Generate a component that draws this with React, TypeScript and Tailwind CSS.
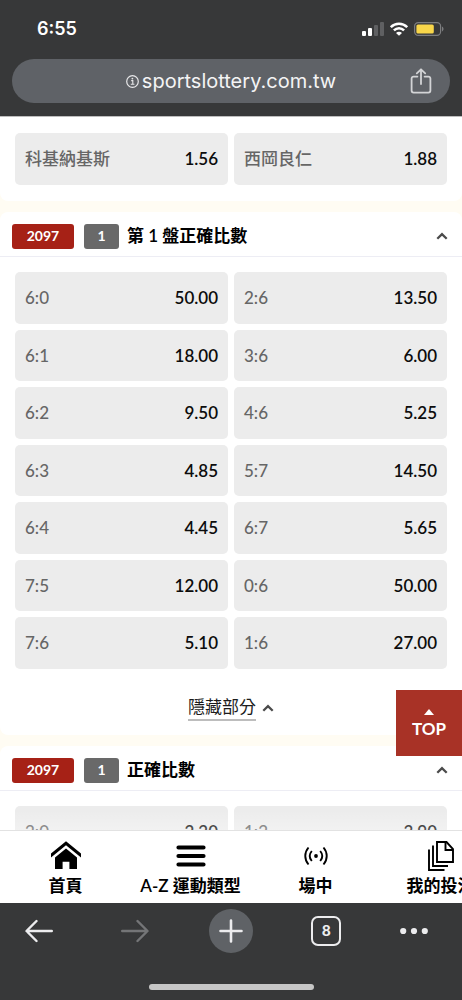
type Odd = {
  label: string;
  value: string;
};

const matchOdds: Odd[] = [
  { label: '科基納基斯', value: '1.56' },
  { label: '西岡良仁', value: '1.88' },
];

const firstSetOdds: Odd[] = [
  { label: '6:0', value: '50.00' },
  { label: '2:6', value: '13.50' },
  { label: '6:1', value: '18.00' },
  { label: '3:6', value: '6.00' },
  { label: '6:2', value: '9.50' },
  { label: '4:6', value: '5.25' },
  { label: '6:3', value: '4.85' },
  { label: '5:7', value: '14.50' },
  { label: '6:4', value: '4.45' },
  { label: '6:7', value: '5.65' },
  { label: '7:5', value: '12.00' },
  { label: '0:6', value: '50.00' },
  { label: '7:6', value: '5.10' },
  { label: '1:6', value: '27.00' },
];

const finalOdds: Odd[] = [
  { label: '2:0', value: '2.20' },
  { label: '1:2', value: '3.90' },
];

const StatusBar = () => (
  <div className="flex h-[59px] items-center justify-between pr-[18px] pb-[2px] pl-[37px] font-['Inter',sans-serif]">
    <span className="text-lg font-semibold text-white">6:55</span>
    <div className="flex items-center gap-[6px]">
      <svg width="22" height="14" viewBox="0 0 22 14" aria-hidden="true">
        <rect x="0" y="9" width="4" height="5" rx="1" fill="#fff" />
        <rect x="6" y="6" width="4" height="8" rx="1" fill="#fff" />
        <rect x="12" y="3" width="4" height="11" rx="1" fill="#5f6062" />
        <rect x="18" y="0" width="4" height="14" rx="1" fill="#5f6062" />
      </svg>
      <svg width="18" height="14" viewBox="0 0 18 14" aria-hidden="true">
        <g fill="none" stroke="#fff" strokeWidth="2.5">
          <path d="M.8 5.2C5.4.6 12.6.6 17.2 5.2" />
          <path d="M3.9 8.4c2.9-2.9 7.3-2.9 10.2 0" />
        </g>
        <path d="M9 13.8 6 10.9c1.7-1.6 4.3-1.6 6 0z" fill="#fff" />
      </svg>
      <svg width="30" height="14" viewBox="0 0 30 14" aria-hidden="true">
        <rect
          x=".6"
          y=".6"
          width="26"
          height="12.8"
          rx="3.6"
          fill="none"
          stroke="#7c7d7f"
          strokeWidth="1.2"
        />
        <rect x="2.4" y="2.4" width="17.4" height="9.2" rx="1.6" fill="#f8d64a" />
        <path d="M28 4.6c2 .8 2 4 0 4.8z" fill="#7c7d7f" />
      </svg>
    </div>
  </div>
);

const AddressBar = () => (
  <div className="relative mx-3 flex h-11 items-center justify-center rounded-full bg-[#5f6267]">
    <a
      href="#site"
      className="flex items-center gap-[3px] font-['Inter',sans-serif] text-xl text-[#f4f4f5]"
    >
      <svg width="13" height="13" viewBox="0 0 13 13" aria-hidden="true">
        <circle cx="6.5" cy="6.5" r="5.8" fill="none" stroke="#e8e8ea" strokeWidth="1.2" />
        <path
          d="M5.2 5.6h1.6v3.6M4.8 9.3h3.6"
          fill="none"
          stroke="#e8e8ea"
          strokeWidth="1.1"
        />
        <circle cx="6.4" cy="3.6" r=".9" fill="#e8e8ea" />
      </svg>
      sportslottery.com.tw
    </a>
    <button type="button" aria-label="分享" className="absolute right-[18px]">
      <svg
        width="22"
        height="26"
        viewBox="0 0 22 26"
        fill="none"
        stroke="#d3d4d6"
        strokeWidth="1.8"
        strokeLinecap="round"
        strokeLinejoin="round"
        aria-hidden="true"
      >
        <path d="M7.4 8.6H3.6a2 2 0 0 0-2 2v12a2 2 0 0 0 2 2h14.8a2 2 0 0 0 2-2v-12a2 2 0 0 0-2-2h-3.8" />
        <path d="M11 16V1.4M6.8 5.4 11 1.3l4.2 4.1" />
      </svg>
    </button>
  </div>
);

const Chevron = () => (
  <svg width="12" height="8" viewBox="0 0 12 8" aria-hidden="true">
    <path d="M1.3 6.8 6 2.2l4.7 4.6" fill="none" stroke="#4b4b4b" strokeWidth="2.3" />
  </svg>
);

const OddButton = ({ label, value }: Odd) => (
  <button
    type="button"
    className="flex min-h-[51px] items-center justify-between rounded-[5px] bg-[#ececec] px-[10px] text-[17px]"
  >
    <span className="font-['Lato_Medium','Lato','Noto_Sans_CJK_TC',sans-serif] font-medium text-[#666]">
      {label}
    </span>
    <span className="font-semibold text-[#0c0c0c]">{value}</span>
  </button>
);

const SectionHeader = ({ title }: { title: string }) => (
  <div className="flex h-[45px] items-center border-b border-[#ededf4] pt-1 pr-[14px] pl-3">
    <span className="mr-[10px] flex h-[25px] w-[62px] items-center justify-center rounded-[3px] bg-[#a62116] text-sm font-bold text-white">
      2097
    </span>
    <span className="mr-2 flex h-[25px] w-[35px] items-center justify-center rounded-[3px] bg-[#696969] text-sm font-bold text-white">
      1
    </span>
    <h2 className="flex-1 text-[17px] font-semibold text-black">{title}</h2>
    <button type="button" aria-label={title}>
      <Chevron />
    </button>
  </div>
);

const BottomNav = () => (
  <nav className="flex h-[73px] shrink-0 overflow-hidden border-t border-[#e2e2e2] bg-white pl-[3px] text-[17px] leading-6 font-semibold">
    <a href="#home" className="flex w-[125px] shrink-0 flex-col items-center pt-[9px]">
      <svg width="32" height="34" viewBox="0 0 32 34" aria-hidden="true">
        <path d="M1 13.5 16 1.2l15 12.300v4L16 5.200 1 17.500z" fill="#000" />
        <path d="M5 17.6 16 8.600l11 9V29h-7.600v-7.200h-6.800V29H5z" fill="#000" />
      </svg>
      <span>首頁</span>
    </a>
    <a href="#sports" className="flex w-[125px] shrink-0 flex-col items-center pt-[9px]">
      <svg width="32" height="34" viewBox="0 0 32 34" aria-hidden="true">
        <path
          d="M3.500 7.500h25M3.500 16h25M3.500 24.500h25"
          stroke="#000"
          strokeWidth="4.200"
          strokeLinecap="round"
        />
      </svg>
      <span className="whitespace-nowrap">A-Z 運動類型</span>
    </a>
    <a href="#live" className="flex w-[125px] shrink-0 flex-col items-center pt-[9px]">
      <svg
        width="32"
        height="34"
        viewBox="0 0 32 34"
        fill="none"
        stroke="#000"
        strokeWidth="1.900"
        aria-hidden="true"
      >
        <path d="M8.500 7.500c-4.300 5-4.300 12 0 17M23.500 7.500c4.300 5 4.300 12 0 17" />
        <path d="M11.800 11c-2.500 3-2.500 7 0 10M20.200 11c2.500 3 2.500 7 0 10" />
        <circle cx="16" cy="16" r="1.900" fill="#000" stroke="none" />
      </svg>
      <span>場中</span>
    </a>
    <a href="#bets" className="flex w-[125px] shrink-0 flex-col items-center pt-[9px]">
      <svg
        width="32"
        height="34"
        viewBox="0 0 32 34"
        fill="none"
        stroke="#000"
        strokeWidth="1.900"
        aria-hidden="true"
      >
        <path d="M12 2h9.500l6.500 7v13H12z" />
        <path d="M20.500 2v8H28" />
        <path d="M8 5.500V26h15M4 9.500V30h15.500" />
      </svg>
      <span className="whitespace-nowrap">我的投注</span>
    </a>
  </nav>
);

const BrowserToolbar = () => (
  <footer className="shrink-0 bg-[#373839] pt-[6px]">
    <div className="flex h-11 items-center justify-between pr-[34px] pl-[17px]">
      <button type="button" aria-label="上一頁" className="flex w-11 justify-center">
        <svg width="28" height="24" viewBox="0 0 28 24" aria-hidden="true">
          <path
            d="M26.800 12H1.800M11.500 2 1.500 12l10 10"
            fill="none"
            stroke="#ececee"
            strokeWidth="2.400"
            strokeLinecap="round"
            strokeLinejoin="round"
          />
        </svg>
      </button>
      <button type="button" aria-label="下一頁" className="flex w-11 justify-center">
        <svg width="28" height="24" viewBox="0 0 28 24" aria-hidden="true">
          <path
            d="M1.200 12h25M16.500 2l10 10-10 10"
            fill="none"
            stroke="#747577"
            strokeWidth="2.400"
            strokeLinecap="round"
            strokeLinejoin="round"
          />
        </svg>
      </button>
      <button
        type="button"
        aria-label="新分頁"
        className="flex size-11 items-center justify-center rounded-full bg-[#5f6266]"
      >
        <svg width="24" height="24" viewBox="0 0 24 24" aria-hidden="true">
          <path
            d="M12 1.500v21M1.500 12h21"
            stroke="#ececee"
            strokeWidth="2.600"
            strokeLinecap="round"
          />
        </svg>
      </button>
      <button type="button" className="flex w-11 justify-center">
        <span className="flex size-[30px] items-center justify-center rounded-[7px] border-2 border-[#ececee] font-['Inter',sans-serif] text-sm font-bold text-[#ececee]">
          8
        </span>
      </button>
      <button type="button" aria-label="更多">
        <svg width="28" height="8" viewBox="0 0 28 8" fill="#ececee" aria-hidden="true">
          <circle cx="3.200" cy="4" r="3.100" />
          <circle cx="14" cy="4" r="3.100" />
          <circle cx="24.800" cy="4" r="3.100" />
        </svg>
      </button>
    </div>
    <div className="flex h-[47px] items-end justify-center pb-[10px]">
      <div className="h-[6px] w-[165px] rounded-full bg-[#c6c6c6]" />
    </div>
  </footer>
);

const App = () => {
  return (
    <div className="flex h-screen flex-col overflow-hidden bg-[#fffcf3] font-['Lato','Noto_Sans_CJK_TC',sans-serif]">
      <header className="shrink-0 border-b border-[#bdbdbd] bg-[#373839] pb-[13px]">
        <StatusBar />
        <AddressBar />
      </header>
      <div className="relative min-h-0 flex-1">
        <main className="flex h-full flex-col gap-[11px] overflow-hidden">
          <section className="shrink-0 rounded-b-lg bg-white px-[15px] py-4">
            <div className="grid min-h-[52px] grid-cols-2 gap-[6px]">
              {matchOdds.map((odd) => (
                <OddButton key={odd.label} {...odd} />
              ))}
            </div>
          </section>
          <section className="shrink-0 rounded-lg bg-white">
            <SectionHeader title="第 1 盤正確比數" />
            <div className="mt-[15px] grid min-h-[397px] auto-rows-fr grid-cols-2 gap-[6px] px-[15px]">
              {firstSetOdds.map((odd) => (
                <OddButton key={odd.label} {...odd} />
              ))}
            </div>
            <div className="flex justify-center pt-[26px] pb-[14px]">
              <button
                type="button"
                className="flex items-center gap-[6px] text-[17px] text-[#1c1c1c]"
              >
                <span className="border-b-2 border-[#bdbdbd] leading-6">隱藏部分</span>
                <Chevron />
              </button>
            </div>
          </section>
          <section className="shrink-0 rounded-t-lg bg-white">
            <SectionHeader title="正確比數" />
            <div className="mt-[15px] grid min-h-[52px] grid-cols-2 gap-[6px] px-[15px]">
              {finalOdds.map((odd) => (
                <OddButton key={odd.label} {...odd} />
              ))}
            </div>
          </section>
        </main>
        <div className="pointer-events-none absolute inset-x-0 bottom-0 h-5 bg-linear-to-t from-white/30 to-transparent" />
        <a
          href="#top"
          className="absolute right-0 bottom-[74px] flex h-[66px] w-[66px] flex-col items-center justify-center gap-[2px] bg-[#a83226] pt-1 text-[17px] leading-6 font-bold text-white"
        >
          <svg width="10" height="6" viewBox="0 0 10 6" aria-hidden="true">
            <path d="M0 6 5 0l5 6z" fill="#fff" />
          </svg>
          TOP
        </a>
      </div>
      <BottomNav />
      <BrowserToolbar />
    </div>
  );
};

export default App;
